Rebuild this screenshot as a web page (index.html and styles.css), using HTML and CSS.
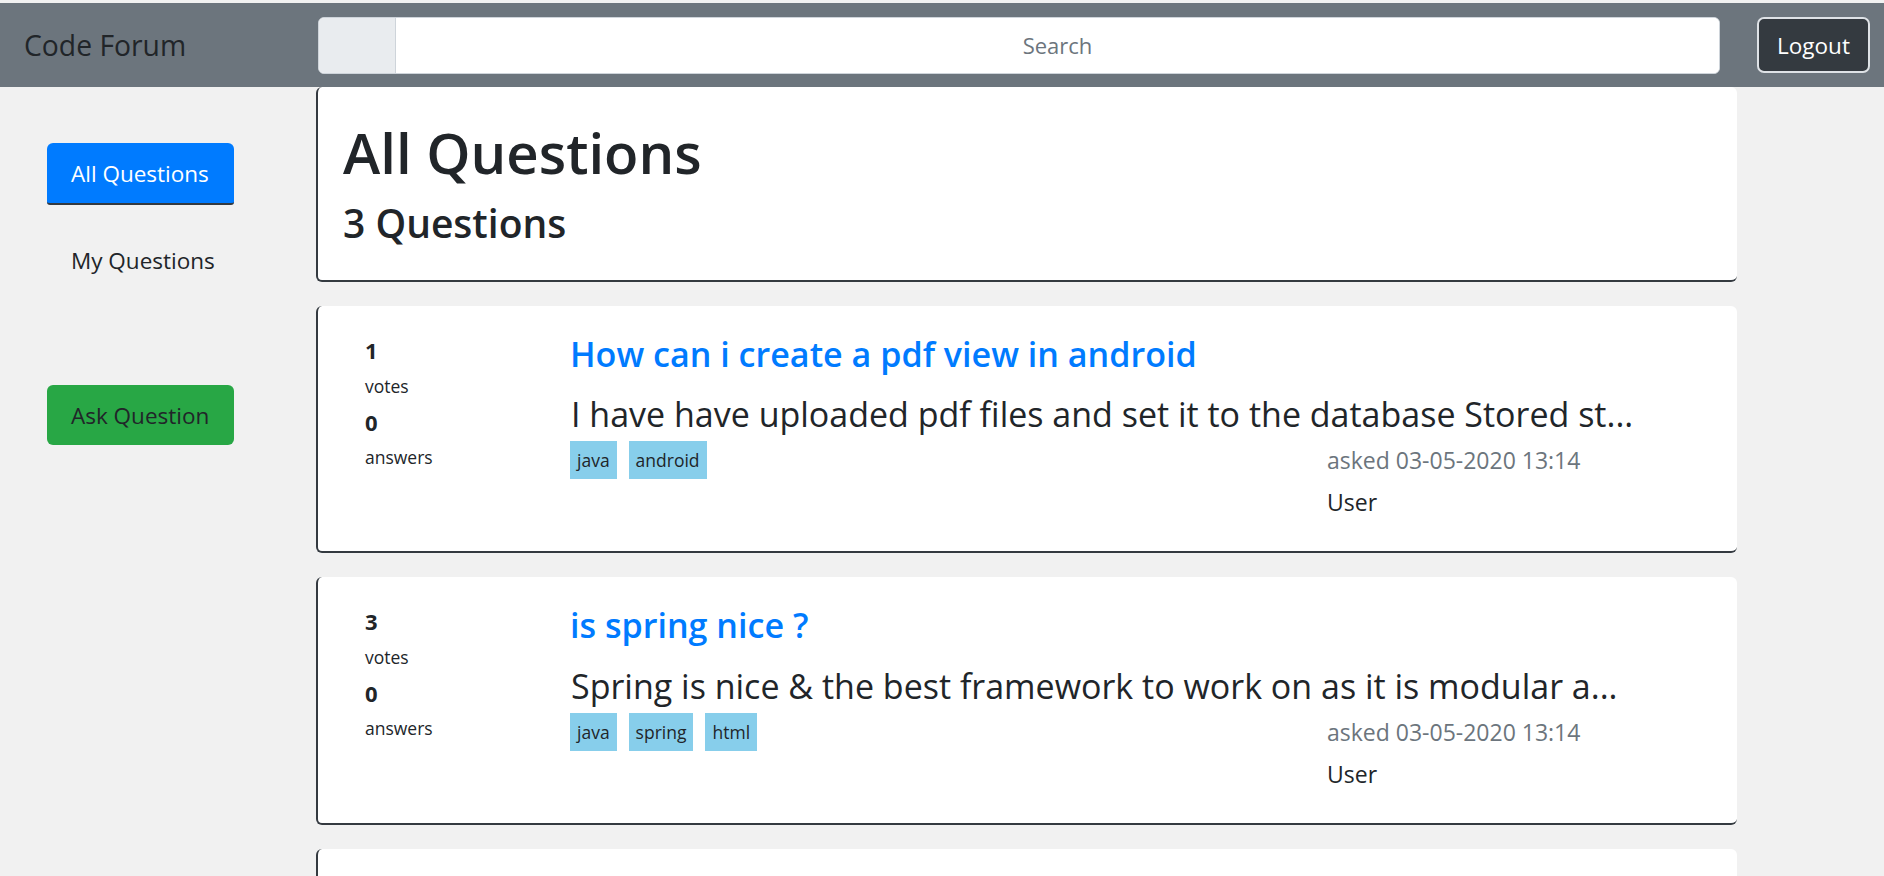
FILE: index.html
```html
<!DOCTYPE html>
<html lang="en">
<head>
<meta charset="utf-8">
<title>Code Forum</title>
<link rel="stylesheet" href="styles.css">
</head>
<body>
<nav class="navbar">
  <a class="brand" href="#">Code Forum</a>
  <div class="search">
    <span class="search-prepend"></span>
    <input class="search-input" type="text" placeholder="Search">
  </div>
  <button class="btn-logout" type="button">Logout</button>
</nav>
<div class="layout">
  <aside class="sidebar">
    <a class="side-item side-active" href="#">All Questions</a>
    <a class="side-item side-link" href="#">My Questions</a>
    <a class="side-item side-ask" href="#">Ask Question</a>
  </aside>
  <main class="main">
    <section class="card header-card">
      <h1 class="page-title">All Questions</h1>
      <h2 class="page-count">3 Questions</h2>
    </section>

    <article class="card q-card">
      <div class="stats">
        <div class="stat-num">1</div>
        <div class="stat-label">votes</div>
        <div class="stat-num">0</div>
        <div class="stat-label">answers</div>
      </div>
      <div class="q-body">
        <a class="q-title" href="#">How can i create a pdf view in android</a>
        <p class="q-excerpt">I have have uploaded pdf files and set it to the database Stored st...</p>
        <div class="q-foot">
          <div class="tags"><span class="tag">java</span><span class="tag">android</span></div>
          <div class="meta">
            <div class="asked">asked 03-05-2020 13:14</div>
            <div class="user">User</div>
          </div>
        </div>
      </div>
    </article>

    <article class="card q-card">
      <div class="stats">
        <div class="stat-num">3</div>
        <div class="stat-label">votes</div>
        <div class="stat-num">0</div>
        <div class="stat-label">answers</div>
      </div>
      <div class="q-body">
        <a class="q-title" href="#">is spring nice ?</a>
        <p class="q-excerpt">Spring is nice &amp; the best framework to work on as it is modular a...</p>
        <div class="q-foot">
          <div class="tags"><span class="tag">java</span><span class="tag">spring</span><span class="tag">html</span></div>
          <div class="meta">
            <div class="asked">asked 03-05-2020 13:14</div>
            <div class="user">User</div>
          </div>
        </div>
      </div>
    </article>

    <article class="card q-card q-card-empty"></article>
  </main>
</div>
</body>
</html>
```

FILE: styles.css
```css
* { box-sizing: border-box; }

html, body { margin: 0; }

body {
  background: #f1f1f1;
  padding-top: 3px;
  font-family: "Open Sans", "Noto Sans", sans-serif;
  color: #212529;
}

/* ---------- navbar ---------- */
.navbar {
  display: flex;
  align-items: center;
  height: 84px;
  background: #6c757d;
  padding: 0 14px 0 24px;
}

.brand {
  width: 294px;
  flex: none;
  font-size: 28.3px;
  color: #212529;
  text-decoration: none;
  line-height: 1;
}

.search {
  flex: 1;
  display: flex;
  height: 57px;
  margin-right: 37px;
  border: 1px solid #ced4da;
  border-radius: 6px;
  overflow: hidden;
  background: #fff;
}

.search-prepend {
  width: 77px;
  flex: none;
  background: #e9ecef;
  border-right: 1px solid #ced4da;
}

.search-input {
  flex: 1;
  border: 0;
  padding: 0;
  outline: none;
  background: #fff;
  font-family: "Open Sans", "Noto Sans", sans-serif;
  font-size: 22px;
  text-align: center;
  color: #495057;
}

.search-input::placeholder { color: #6c757d; }

.btn-logout {
  width: 113px;
  height: 56px;
  flex: none;
  padding: 0;
  background: #343a40;
  color: #fff;
  border: 2px solid #dee2e6;
  border-radius: 7px;
  font-family: "Open Sans", "Noto Sans", sans-serif;
  font-size: 22.5px;
}

/* ---------- layout ---------- */
.layout {
  display: flex;
  align-items: flex-start;
}

.sidebar {
  width: 316px;
  flex: none;
  display: flex;
  flex-direction: column;
  padding: 56px 0 0 47px;
}

.side-item {
  width: 187px;
  height: 60px;
  display: flex;
  align-items: center;
  padding-left: 24px;
  font-size: 22.5px;
  text-decoration: none;
  color: #212529;
  border-radius: 6px;
}

.side-active {
  height: 62px;
  background: #007bff;
  color: #fff;
  border-bottom: 2px solid #343a40;
  border-radius: 6px 6px 3px 3px;
}

.side-link { margin-top: 25px; }

.side-ask {
  margin-top: 95px;
  background: #28a745;
  color: #212529;
}

.main {
  width: 1421px;
  flex: none;
  display: flex;
  flex-direction: column;
  gap: 24px;
}

/* ---------- cards ---------- */
.card {
  background: #fff;
  border-left: 2px solid #343a40;
  border-bottom: 2px solid #343a40;
  border-radius: 6px;
}

.header-card {
  padding: 32px 25px 35px;
}

.page-title {
  margin: 0;
  font-size: 56.3px;
  font-weight: 600;
  line-height: 66px;
}

.page-count {
  margin: 14.5px 0 0;
  font-size: 39px;
  font-weight: 600;
  line-height: 45.6px;
}

.q-card {
  display: flex;
  padding: 28px 24px 31.5px 47px;
}

.q-card-empty { height: 247px; }

.stats {
  width: 205px;
  flex: none;
  display: flex;
  flex-direction: column;
  gap: 6.5px;
}

.stat-num {
  font-size: 22px;
  font-weight: 700;
  line-height: 33px;
}

.stat-label {
  font-size: 17.5px;
  line-height: 25.5px;
}

.q-body {
  flex: 1;
  min-width: 0;
  display: flex;
  flex-direction: column;
}

.q-title {
  display: block;
  font-size: 34.1px;
  font-weight: 600;
  line-height: 40.2px;
  color: #007bff;
  text-decoration: none;
}

.q-excerpt {
  margin: 15px 0 0;
  font-size: 34px;
  line-height: 51px;
  white-space: nowrap;
  padding-left: 1px;
}

.q-foot {
  margin-top: 1px;
  display: grid;
  grid-template-columns: 757px 1fr;
}

.tags {
  display: flex;
  gap: 12px;
  height: 38px;
}

.tag {
  background: #87ceeb;
  font-size: 17.5px;
  line-height: 38px;
  padding: 0 7px;
  color: #212529;
}

.asked {
  font-size: 23px;
  line-height: 38px;
  color: #6c757d;
}

.user {
  margin-top: 6px;
  font-size: 23px;
  line-height: 34.5px;
  color: #212529;
}
```
